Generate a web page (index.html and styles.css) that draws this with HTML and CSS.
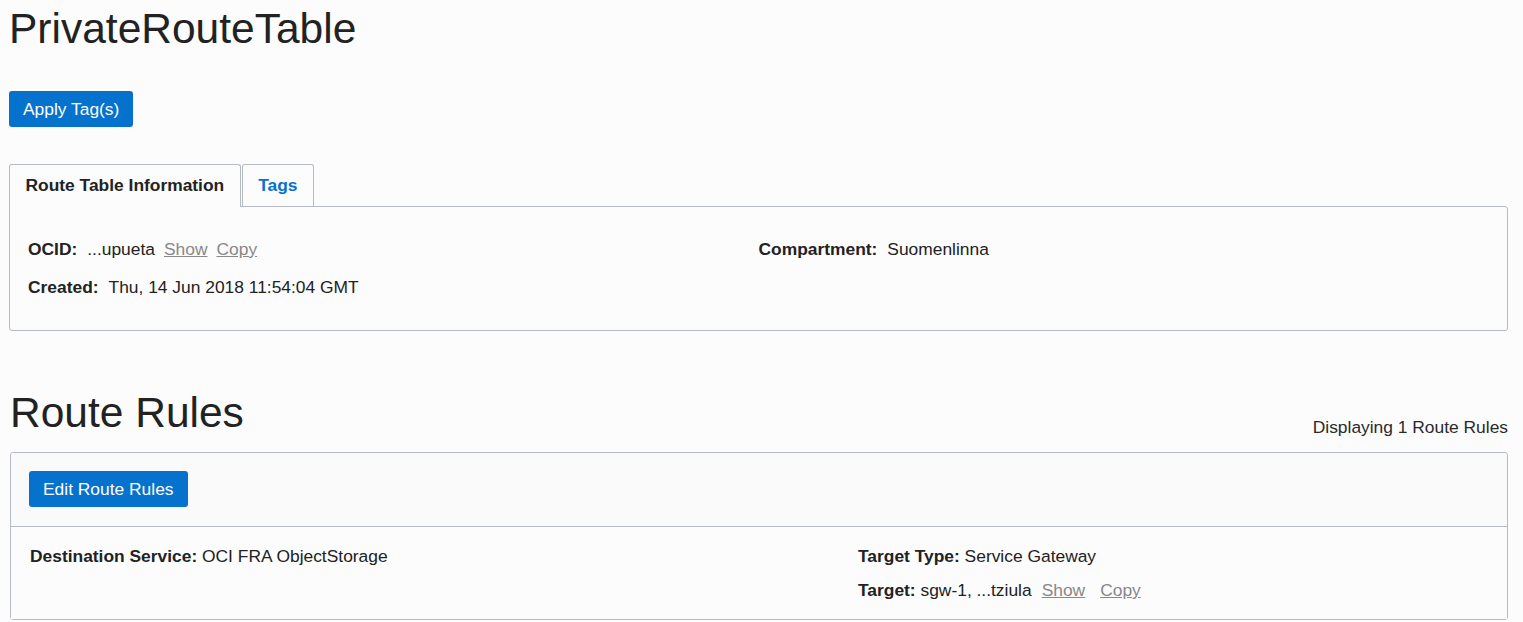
FILE: index.html
```html
<!DOCTYPE html>
<html lang="en">
<head>
<meta charset="utf-8">
<title>PrivateRouteTable</title>
<link rel="stylesheet" href="styles.css">
</head>
<body>
<div class="page">
  <h1 class="title">PrivateRouteTable</h1>
  <div class="actions">
    <button class="btn">Apply Tag(s)</button>
  </div>

  <div class="tabs">
    <div class="tab tab-active">Route Table Information</div>
    <div class="tab tab-link">Tags</div>
  </div>
  <div class="tab-panel">
    <div class="info-grid">
      <div class="info-col">
        <div class="info-row"><span class="label">OCID:</span><span class="value">...upueta</span><a class="mini-link">Show</a><a class="mini-link">Copy</a></div>
        <div class="info-row"><span class="label">Created:</span><span class="value">Thu, 14 Jun 2018 11:54:04 GMT</span></div>
      </div>
      <div class="info-col">
        <div class="info-row"><span class="label">Compartment:</span><span class="value">Suomenlinna</span></div>
      </div>
    </div>
  </div>

  <section class="rules">
    <div class="rules-head">
      <h2 class="subtitle">Route Rules</h2>
      <div class="count">Displaying 1 Route Rules</div>
    </div>
    <div class="rules-panel">
      <div class="rules-toolbar">
        <button class="btn">Edit Route Rules</button>
      </div>
      <div class="rules-body">
        <div class="rule-col">
          <div class="rule-row"><b>Destination Service:</b> OCI FRA ObjectStorage</div>
        </div>
        <div class="rule-col">
          <div class="rule-row"><b>Target Type:</b> Service Gateway</div>
          <div class="rule-row"><b>Target:</b> sgw-1, ...tziula<a class="mini-link gap1">Show</a><a class="mini-link gap2">Copy</a></div>
        </div>
      </div>
    </div>
  </section>
</div>
</body>
</html>
```

FILE: styles.css
```css
* { box-sizing: border-box; }

html, body {
  margin: 0;
  padding: 0;
  background: #fcfcfc;
  color: #222222;
  font-family: "Liberation Sans", Arial, sans-serif;
  font-size: 17.4px;
}

.page {
  padding: 4px 15px 0 9px;
}

.title {
  margin: 0;
  font-size: 42.5px;
  font-weight: normal;
  line-height: 50px;
  color: #222222;
}

.actions {
  margin-top: 37px;
  display: flex;
}

.btn {
  height: 36px;
  padding: 0 14px;
  border: none;
  border-radius: 3px;
  background: #0572ce;
  color: #ffffff;
  font-family: "Liberation Sans", Arial, sans-serif;
  font-size: 17.4px;
  line-height: 36px;
}

.tabs {
  margin-top: 37px;
  display: flex;
  align-items: flex-end;
  gap: 1px;
}

.tab {
  height: 42px;
  padding: 0 15.5px;
  border: 1px solid #b6bbc3;
  border-bottom: 0;
  border-radius: 3px 3px 0 0;
  font-weight: bold;
  line-height: 40px;
  background: #fcfcfc;
}

.tab-active {
  height: 43px;
  margin-bottom: -1px;
  position: relative;
  z-index: 1;
  color: #222222;
}

.tab-link {
  color: #0572ce;
}

.tab-panel {
  border: 1px solid #b6bbc3;
  border-radius: 0 3px 3px 3px;
  padding: 23px 18px 24px;
  background: #fcfcfc;
}

.info-grid {
  display: grid;
  grid-template-columns: 1fr 1fr;
}

.info-row {
  line-height: 38px;
  height: 38px;
  white-space: nowrap;
}

.label {
  font-weight: bold;
  margin-right: 10px;
}

.mini-link {
  color: #888888;
  text-decoration: underline;
  margin-left: 9px;
}

.rules {
  margin-top: 57px;
  margin-left: 1px;
}

.rules-head {
  display: flex;
  justify-content: space-between;
  align-items: flex-end;
}

.subtitle {
  margin: 0;
  font-size: 42.5px;
  font-weight: normal;
  line-height: 50px;
  color: #222222;
}

.count {
  line-height: 20px;
  margin-bottom: 1px;
  color: #2a2a2a;
}

.rules-panel {
  margin-top: 14px;
  border: 1px solid #b6bbc3;
  border-radius: 3px;
  background: #ffffff;
}

.rules-toolbar {
  padding: 18px 18px 19px;
  background: #fafafb;
  border-bottom: 1px solid #b6bbc3;
  border-radius: 3px 3px 0 0;
  display: flex;
}

.rules-body {
  display: grid;
  grid-template-columns: 828px 1fr;
  padding: 12px 19px;
  background: #fcfcfc;
}

.rule-row {
  line-height: 34px;
  height: 34px;
  white-space: nowrap;
}

.mini-link.gap1 { margin-left: 10px; }
.mini-link.gap2 { margin-left: 15px; }
```
